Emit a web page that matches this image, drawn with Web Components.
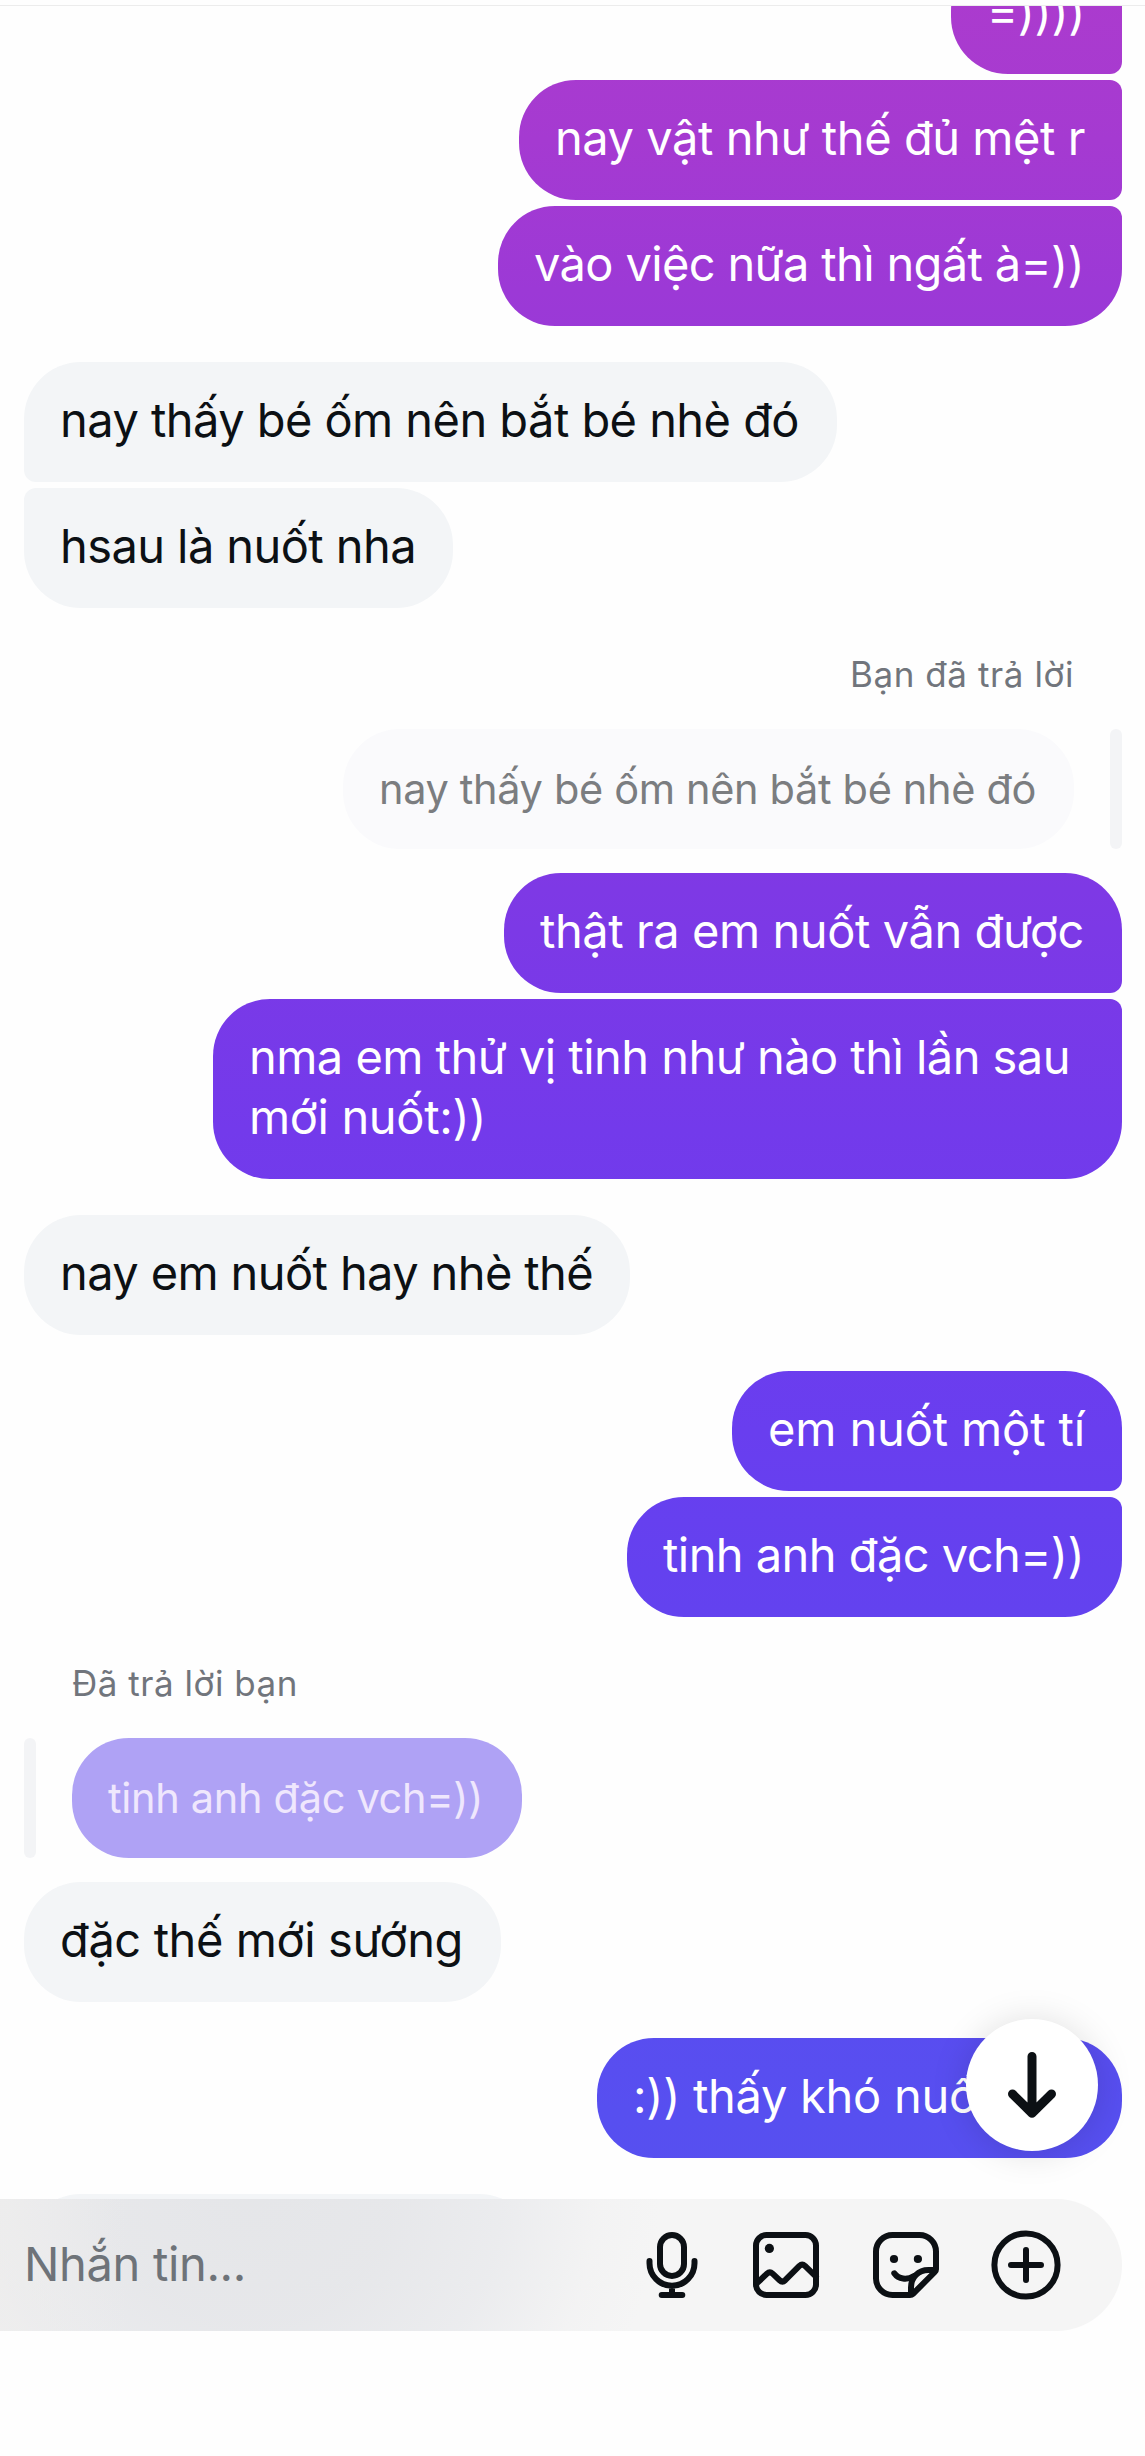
<!DOCTYPE html>
<html lang="vi">
<head>
<meta charset="utf-8">
<title>Tin nhắn</title>
<style>
html,body{margin:0;padding:0;background:#fefefe;overflow:hidden}
body{font-family:Inter,"Noto Sans",sans-serif}
</style>
</head>
<body>
<chat-screen>
  <chat-group side="out" style="margin-top:-52px">
    <chat-bubble kind="out" w="171" tail="both"><fit-line w="98">=))))</fit-line></chat-bubble>
    <chat-bubble kind="out" w="603" tail="both"><fit-line w="530">nay vật như thế đủ mệt r</fit-line></chat-bubble>
    <chat-bubble kind="out" w="624" tail="top"><fit-line w="550">vào việc nữa thì ngất à=))</fit-line></chat-bubble>
  </chat-group>
  <chat-group side="in" style="margin-top:36px">
    <chat-bubble kind="in" w="813" tail="bottom"><fit-line w="739">nay thấy bé ốm nên bắt bé nhè đó</fit-line></chat-bubble>
    <chat-bubble kind="in" w="429" tail="top"><fit-line w="356">hsau là nuốt nha</fit-line></chat-bubble>
  </chat-group>
  <chat-quote side="out">
    <fit-line slot="label" w="224">Bạn đã trả lời</fit-line>
    <chat-bubble kind="quote-in" w="731"><fit-line w="657">nay thấy bé ốm nên bắt bé nhè đó</fit-line></chat-bubble>
  </chat-quote>
  <chat-group side="out" style="margin-top:24px">
    <chat-bubble kind="out" w="618" tail="bottom"><fit-line w="544">thật ra em nuốt vẫn được</fit-line></chat-bubble>
    <chat-bubble kind="out" w="909" tail="top"><fit-line w="821">nma em thử vị tinh như nào thì lần sau</fit-line><fit-line w="237">mới nuốt:))</fit-line></chat-bubble>
  </chat-group>
  <chat-group side="in" style="margin-top:36px">
    <chat-bubble kind="in" w="606"><fit-line w="533">nay em nuốt hay nhè thế</fit-line></chat-bubble>
  </chat-group>
  <chat-group side="out" style="margin-top:36px">
    <chat-bubble kind="out" w="390" tail="bottom"><fit-line w="317">em nuốt một tí</fit-line></chat-bubble>
    <chat-bubble kind="out" w="495" tail="top"><fit-line w="421">tinh anh đặc vch=))</fit-line></chat-bubble>
  </chat-group>
  <chat-quote side="in">
    <fit-line slot="label" w="226">Đã trả lời bạn</fit-line>
    <chat-bubble kind="quote-out" w="450"><fit-line w="375">tinh anh đặc vch=))</fit-line></chat-bubble>
  </chat-quote>
  <chat-group side="in" style="margin-top:24px">
    <chat-bubble kind="in" w="477"><fit-line w="403">đặc thế mới sướng</fit-line></chat-bubble>
  </chat-group>
  <chat-group side="out" style="margin-top:36px">
    <chat-bubble kind="out" w="525"><fit-line w="359">:)) thấy khó nuốt</fit-line></chat-bubble>
  </chat-group>
  <chat-group side="in" style="margin-top:36px">
    <chat-bubble kind="in" w="512"></chat-bubble>
  </chat-group>
  <jump-button slot="jump"></jump-button>
  <message-composer slot="composer">Nhắn tin...</message-composer>
</chat-screen>

<script>
const mount = (el, html) => { el.attachShadow({ mode: "open" }).innerHTML = html; };

// One line of text whose tracking is tuned so that it spans the width in its "w" attribute.
class FitLine extends HTMLElement {
  connectedCallback() {
    if (!this.shadowRoot) mount(this, `<style>:host{display:block;white-space:nowrap}span{display:inline-block}</style><span><slot></slot></span>`);
    requestAnimationFrame(() => this.fit());
    this.fit();
  }
  fit() {
    const span = this.shadowRoot.querySelector("span");
    span.style.letterSpacing = "0px";
    const natural = span.getBoundingClientRect().width;
    const n = [...this.textContent.normalize("NFC")].length;
    if (natural && n) span.style.letterSpacing = ((this.getAttribute("w") - natural) / n).toFixed(3) + "px";
  }
}

class ChatBubble extends HTMLElement {
  connectedCallback() {
    mount(this, `<style>
      :host{display:block;box-sizing:border-box;min-height:120px;padding:28px 36px 32px;border-radius:57px;
        font-size:47px;line-height:60px;color:#0c1014;background:#f3f5f7;flex:none}
      :host([kind=out]){color:#fff;background:linear-gradient(180deg,#ab3bce 0,#a53ad1 140px,#9c39d6 290px,#7c39e6 930px,#733aeb 1130px,#693eef 1430px,#6441ef 1570px,#574ff0 2110px,#5552f0 2456px) fixed}
      :host([kind=quote-in]),:host([kind=quote-out]){font-size:41.5px;padding-top:30px;padding-bottom:30px}
      :host([kind=quote-in]){background:#fafafc;color:#7b7d80}
      :host([kind=quote-out]){background:#afa2f5;color:#efe7fd}
      :host([kind=out][tail=both]){border-top-right-radius:12px;border-bottom-right-radius:12px}
      :host([kind=out][tail=top]){border-top-right-radius:12px}
      :host([kind=out][tail=bottom]){border-bottom-right-radius:12px}
      :host([kind=in][tail=top]){border-top-left-radius:12px}
      :host([kind=in][tail=bottom]){border-bottom-left-radius:12px}
    </style><slot></slot>`);
    this.style.width = this.getAttribute("w") + "px";
  }
}

class ChatGroup extends HTMLElement {
  connectedCallback() {
    mount(this, `<style>
      :host{display:flex;flex-direction:column;gap:6px;align-items:flex-start;flex:none}
      :host([side=out]){align-items:flex-end}
    </style><slot></slot>`);
  }
}

class ChatQuote extends HTMLElement {
  connectedCallback() {
    mount(this, `<style>
      :host{display:flex;flex-direction:column;align-items:flex-start;flex:none}
      :host([side=out]){align-items:flex-end}
      .label{font-size:35px;line-height:48px;color:#71757c;padding:42px 48px 31px}
      .row{display:flex;gap:36px}
      :host([side=out]) .row{flex-direction:row-reverse}
      .bar{width:12px;border-radius:6px;background:#f3f4f6}
    </style><div class="label"><slot name="label"></slot></div><div class="row"><div class="bar"></div><slot></slot></div>`);
  }
}

class JumpButton extends HTMLElement {
  connectedCallback() {
    mount(this, `<style>
      :host{display:block;width:132px;height:132px;border-radius:50%;background:#fff;box-shadow:0 2px 36px rgba(0,0,0,.13)}
      svg{display:block}
    </style><svg width="132" height="132" fill="none" stroke="#0c1014" stroke-width="9" stroke-linecap="round" stroke-linejoin="round"><path d="M66 37.5V92.5M46.5 75L66 94.3L85.5 75"/></svg>`);
  }
}

const ICONS = {
  mic: `<rect x="24" y="6" width="24" height="41" rx="12"/><path d="M13.5 32v2.3a22.5 22.5 0 0 0 45 0V32M36 57v9M25.7 66h20.6"/>`,
  image: `<rect x="6" y="6" width="60" height="60" rx="10.5"/><circle cx="19.4" cy="19.4" r="4.6" fill="#0c1014" stroke="none"/><path d="M7 54.2L17 44.6q2.8-2.6 5.6 0L29.6 51.2q2.8 2.6 5.6 0L49.4 36.9q2.8-2.6 5.6 0L66 47.6"/>`,
  sticker: `<path d="M40 66H22.5A16.5 16.5 0 0 1 6 49.5V22.5A16.5 16.5 0 0 1 22.5 6H49.5A16.5 16.5 0 0 1 66 22.5V40.2q0 1.6-1.2 2.8L43 64.8q-1.2 1.2-3 1.2"/><path d="M41 64V58.5C41 48 48.5 41 58.5 41H65M24.3 44.3C28.5 50.3 37 51.5 44 47"/><circle cx="24" cy="30" r="4.1" fill="#0c1014" stroke="none"/><circle cx="47.9" cy="30" r="4.1" fill="#0c1014" stroke="none"/>`,
  plus: `<circle cx="36" cy="36" r="31.6"/><path d="M36 21V51M21 36H51"/>`
};
class ComposerIcon extends HTMLElement {
  connectedCallback() {
    mount(this, `<style>:host{display:block;width:72px;height:72px}svg{display:block}</style>
      <svg width="72" height="72" viewBox="0 0 72 72" fill="none" stroke="#0c1014" stroke-width="6" stroke-linecap="round" stroke-linejoin="round">${ICONS[this.getAttribute("name")]}</svg>`);
  }
}

class MessageComposer extends HTMLElement {
  connectedCallback() {
    mount(this, `<style>
      :host{display:flex;align-items:center;box-sizing:border-box;height:132px;margin-right:23px;padding:0 60px 0 24px;border-radius:0 66px 66px 0;
        background:linear-gradient(90deg,rgba(238,237,236,.6) 0,rgba(238,237,236,0) 130px),radial-gradient(ellipse 410px 390px at 250px -10px,rgba(228,229,232,.95) 0,rgba(229,230,233,.9) 35%,rgba(232,233,236,.75) 62%,rgba(240,240,241,.4) 85%,rgba(245,245,245,0) 100%),#f5f5f5}
      .field{flex:1;font-size:47px;line-height:60px;color:#6e7379;margin-top:-2px}
      .icons{display:flex;gap:48px}
      composer-icon[name=mic]{margin-right:-6px}
    </style>
    <div class="field"><fit-line w="222"></fit-line></div>
    <div class="icons"><composer-icon name="mic"></composer-icon><composer-icon name="image"></composer-icon><composer-icon name="sticker"></composer-icon><composer-icon name="plus"></composer-icon></div>`);
    this.shadowRoot.querySelector("fit-line").textContent = this.textContent;
    this.shadowRoot.querySelector("fit-line").fit?.();
  }
}

class ChatScreen extends HTMLElement {
  connectedCallback() {
    mount(this, `<style>
      :host{display:flex;flex-direction:column;box-sizing:border-box;position:relative;width:1145px;height:2456px;padding-bottom:125px}
      header{flex:none;height:5px;border-bottom:1px solid #ececec}
      main{flex:1;min-height:0;overflow:hidden;display:flex;flex-direction:column;padding:0 23px 0 24px}
      .jump{position:absolute;left:966px;top:2019px}
    </style><header></header><main><slot></slot></main><slot name="composer"></slot><div class="jump"><slot name="jump"></slot></div>`);
  }
}

customElements.define("fit-line", FitLine);
customElements.define("chat-bubble", ChatBubble);
customElements.define("chat-group", ChatGroup);
customElements.define("chat-quote", ChatQuote);
customElements.define("jump-button", JumpButton);
customElements.define("composer-icon", ComposerIcon);
customElements.define("message-composer", MessageComposer);
customElements.define("chat-screen", ChatScreen);
document.querySelectorAll("fit-line").forEach(l => l.fit());
</script>
</body>
</html>
